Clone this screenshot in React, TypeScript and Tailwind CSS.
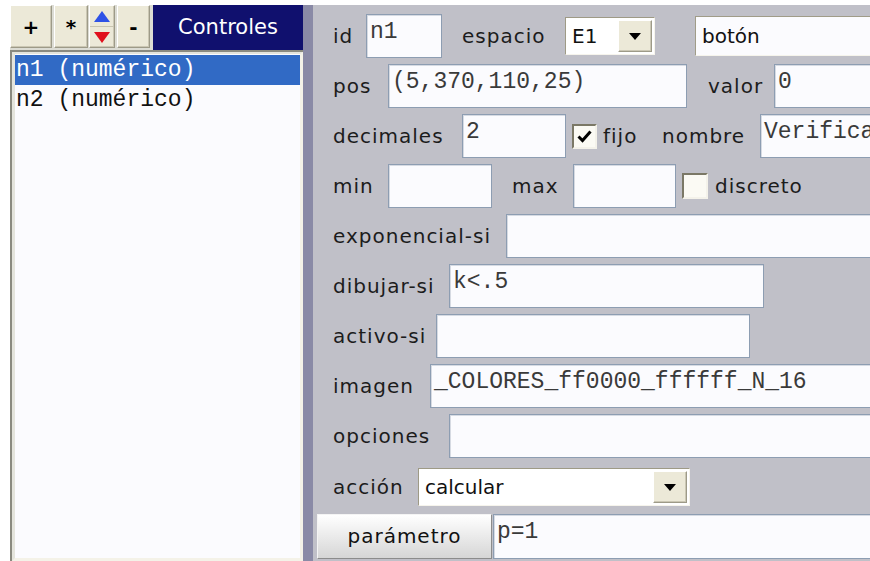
import React from 'react';

const SANS = "font-['DejaVu_Sans',sans-serif]";
const MONO = "font-['Liberation_Mono','Courier_New',monospace]";

// beige 3D face shared by the small buttons
const RAISED =
  'bg-[#ece9d8] border border-t-white border-l-white border-r-[#9d9a88] border-b-[#9d9a88] shadow-[inset_-1px_-1px_0_#cbc7b4]';

type Kids = { children?: React.ReactNode; className?: string };

function Label({ children, className = '' }: Kids) {
  return (
    <span className={`shrink-0 whitespace-nowrap text-[20px] tracking-[1px] text-[#1c1c1c] ${className}`}>
      {children}
    </span>
  );
}

function Box({ value = '', className = '' }: { value?: string; className?: string }) {
  return (
    <div
      className={`h-[44px] shrink-0 overflow-hidden whitespace-nowrap border border-[#8d9db2] bg-[#fbfbfe] pl-[3px] pt-[2px] text-[23px] leading-[30px] text-[#3a3a3a] shadow-[inset_1px_1px_0_#d6dae2] ${MONO} ${className}`}
    >
      {value}
    </div>
  );
}

function DropArrow() {
  return (
    <div className={`flex h-full w-[34px] shrink-0 items-center justify-center ${RAISED}`}>
      <svg width="12" height="7" viewBox="0 0 12 7">
        <path d="M0 0h12L6 7z" fill="#000" />
      </svg>
    </div>
  );
}

function Select({ value, className = '' }: { value: string; className?: string }) {
  return (
    <div
      className={`flex h-[38px] shrink-0 border border-t-[#9e9a86] border-l-[#9e9a86] border-b-[#f6f4ec] border-r-[#f6f4ec] bg-white p-[2px] ${className}`}
    >
      <div className="flex-1 pl-[4px] text-[20px] leading-[32px] text-[#111]">{value}</div>
      <DropArrow />
    </div>
  );
}

function Check({ checked = false, className = '' }: { checked?: boolean; className?: string }) {
  return (
    <div
      className={`flex h-[25px] w-[25px] shrink-0 items-center justify-center border-2 border-t-[#7b7866] border-l-[#7b7866] border-b-[#f4f2ea] border-r-[#f4f2ea] bg-[#fbfaf4] ${className}`}
    >
      {checked && (
        <svg width="15" height="13" viewBox="0 0 15 13">
          <path d="M1.5 6.5l4 4 8-9" stroke="#000" strokeWidth="3" fill="none" />
        </svg>
      )}
    </div>
  );
}

function Row({ children, className = '' }: Kids) {
  return <div className={`flex h-[50px] items-center pl-[20px] ${className}`}>{children}</div>;
}

function ToolButton({ children, className = '' }: Kids) {
  return (
    <div className={`flex h-[43px] shrink-0 items-center justify-center text-[20px] font-bold text-black ${RAISED} ${className}`}>
      {children}
    </div>
  );
}

function ControlList() {
  const items = ['n1 (numérico)', 'n2 (numérico)'];
  return (
    <div className="ml-[10px] flex w-[293px] flex-col bg-[#dcdcd4]">
      <div className="flex h-[45px] items-start">
        <ToolButton className="w-[42px]">+</ToolButton>
        <ToolButton className="ml-[2px] w-[34px]">*</ToolButton>
        <div className={`ml-[1px] flex h-[43px] w-[26px] flex-col ${RAISED}`}>
          <div className="flex flex-1 items-center justify-center border-b border-[#c8c4b0]">
            <svg width="16" height="11" viewBox="0 0 16 11">
              <path d="M0 11L8 0l8 11z" fill="#2e52e6" />
            </svg>
          </div>
          <div className="flex flex-1 items-center justify-center">
            <svg width="16" height="11" viewBox="0 0 16 11">
              <path d="M0 0h16L8 11z" fill="#e0101c" />
            </svg>
          </div>
        </div>
        <ToolButton className="ml-[2px] w-[33px]">-</ToolButton>
        <div className="ml-[3px] flex h-[45px] flex-1 items-center justify-center bg-[#10106e] text-[21px] text-white">
          Controles
        </div>
      </div>
      <div className="flex flex-1 border-t-2 border-l-2 border-[#8a8a80]">
        <div className="flex flex-1 flex-col border-t-[2px] border-l-[3px] border-r-[3px] border-b-[3px] border-t-[#e4e4dc] border-l-[#e4e4dc] border-r-[#f4f2e8] border-b-[#f4f2e8] bg-[#fbfbfe] pt-[1px]">
          {items.map((it, i) => (
            <div
              key={it}
              className={`h-[30px] whitespace-nowrap pl-[1px] text-[23px] leading-[30px] ${MONO} ${
                i === 0 ? 'bg-[#316ac5] text-white' : 'text-[#111]'
              }`}
            >
              {it}
            </div>
          ))}
        </div>
      </div>
    </div>
  );
}

function Properties() {
  return (
    <div className="flex-1 overflow-hidden bg-[#c0c0c8] pt-[6px]">
      <Row>
        <Label className="w-[33px]">id</Label>
        <Box value="n1" className="w-[76px]" />
        <Label className="ml-[20px] w-[103px]">espacio</Label>
        <Select value="E1" className="w-[90px]" />
        <div className="ml-[40px] flex h-[40px] w-[300px] shrink-0 items-center border border-t-[#a09c88] border-l-[#a09c88] border-b-[#f6f4ec] border-r-[#f6f4ec] bg-[#fbfbfe] pl-[6px] text-[20px] text-[#111]">
          botón
        </div>
      </Row>
      <Row>
        <Label className="w-[55px]">pos</Label>
        <Box value="(5,370,110,25)" className="w-[299px]" />
        <Label className="ml-[21px] w-[66px]">valor</Label>
        <Box value="0" className="w-[200px]" />
      </Row>
      <Row>
        <Label className="w-[129px]">decimales</Label>
        <Box value="2" className="w-[104px]" />
        <Check checked className="ml-[6px]" />
        <Label className="ml-[6px] w-[59px]">fijo</Label>
        <Label className="w-[98px]">nombre</Label>
        <Box value="Verifica" className="w-[200px]" />
      </Row>
      <Row>
        <Label className="w-[55px]">min</Label>
        <Box className="w-[104px]" />
        <Label className="ml-[20px] w-[61px]">max</Label>
        <Box className="w-[103px]" />
        <Check className="ml-[6px] h-[26px] w-[26px]" />
        <Label className="ml-[7px]">discreto</Label>
      </Row>
      <Row>
        <Label className="w-[173px]">exponencial-si</Label>
        <Box className="w-[400px]" />
      </Row>
      <Row>
        <Label className="w-[116px]">dibujar-si</Label>
        <Box value="k<.5" className="w-[315px]" />
      </Row>
      <Row>
        <Label className="w-[103px]">activo-si</Label>
        <Box className="w-[314px]" />
      </Row>
      <Row>
        <Label className="w-[97px]">imagen</Label>
        <Box value="_COLORES_ff0000_ffffff_N_16" className="w-[500px]" />
      </Row>
      <Row>
        <Label className="w-[116px]">opciones</Label>
        <Box className="w-[500px]" />
      </Row>
      <Row className="pt-[2px]">
        <Label className="w-[85px]">acción</Label>
        <Select value="calcular" className="w-[272px]" />
      </Row>
      <div className="flex h-[50px] items-center pl-[4px]">
        <div className="flex h-[45px] w-[175px] shrink-0 items-center justify-center border border-t-[#f4f4f4] border-l-[#f4f4f4] border-r-[#8c8c8c] border-b-[#8c8c8c] bg-gradient-to-b from-white to-[#d6d6d6] text-[20px] tracking-[1px] text-[#111]">
          parámetro
        </div>
        <Box value="p=1" className="ml-[1px] h-[45px] w-[400px]" />
      </div>
    </div>
  );
}

export default function App() {
  return (
    <div className={`flex h-[561px] w-[870px] overflow-hidden bg-white pt-[5px] ${SANS}`}>
      <ControlList />
      <div className="w-[10px] shrink-0 bg-[#8a8aa6]" />
      <Properties />
    </div>
  );
}
